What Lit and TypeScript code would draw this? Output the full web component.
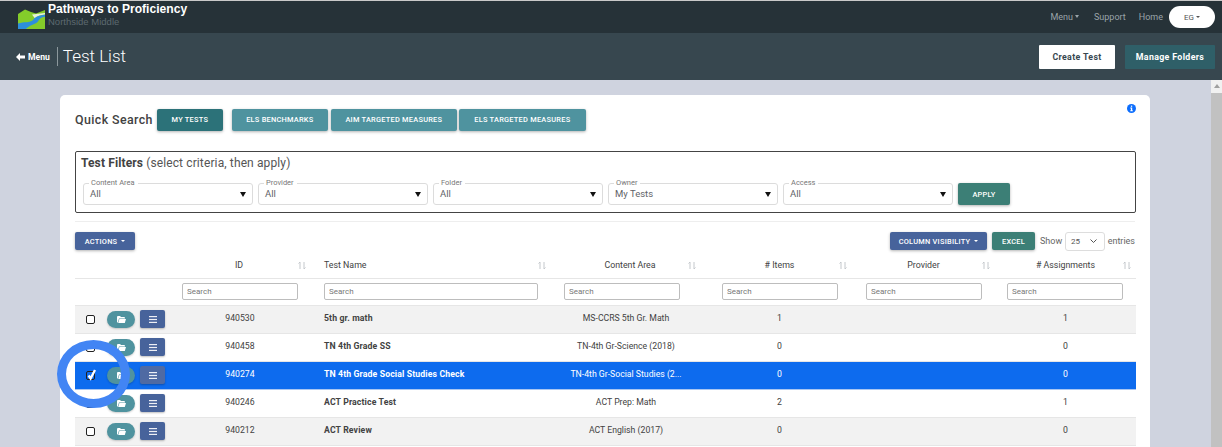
import { LitElement, html, css, svg } from "lit";
import { customElement } from "lit/decorators.js";

interface Row { id: string; name: string; area: string; items: string; assign: string; checked?: boolean; }
const ROWS: Row[] = [
  { id: "940530", name: "5th gr. math", area: "MS-CCRS 5th Gr. Math", items: "1", assign: "1" },
  { id: "940458", name: "TN 4th Grade SS", area: "TN-4th Gr-Science (2018)", items: "0", assign: "0" },
  { id: "940274", name: "TN 4th Grade Social Studies Check", area: "TN-4th Gr-Social Studies (2...", items: "0", assign: "0", checked: true },
  { id: "940246", name: "ACT Practice Test", area: "ACT Prep: Math", items: "2", assign: "1" },
  { id: "940212", name: "ACT Review", area: "ACT English (2017)", items: "0", assign: "0" },
];
const FILTERS = [
  { label: "Content Area", value: "All" },
  { label: "Provider", value: "All" },
  { label: "Folder", value: "All" },
  { label: "Owner", value: "My Tests" },
  { label: "Access", value: "All" },
];
const HEADS = ["ID", "Test Name", "Content Area", "# Items", "Provider", "# Assignments"];
const CLS = ["c-id", "c-name", "c-area", "c-items", "c-prov", "c-assign"];

const caret = html`<span class="caret"></span>`;
const sortIcon = svg`<svg class="sort" width="8" height="9" viewBox="0 0 8 9" fill="none" stroke="currentColor" stroke-width="1"><path d="M2 8V1M.5 2.5 2 1 M6 1v7M6 8 7.5 6.5"/></svg>`;

@customElement("app-root")
export class AppRoot extends LitElement {
  static styles = css`
    :host { display: block; width: 1222px; height: 447px; overflow: hidden; font-family: Roboto, "Liberation Sans", sans-serif; color: #212529; background: #cfd3df; }
    * { box-sizing: border-box; }
    .top { height: 33px; background: #263238; border-top: 1px solid #c9c9c9; display: flex; align-items: center; padding: 0 7px 0 18px; }
    .logo { width: 27px; height: 21px; margin-top: 3px; flex: none; }
    .brand { margin-left: 3px; margin-top: -6px; }
    .brand b { display: block; font-size: 12.1px; line-height: 14px; font-weight: 700; color: #fff; font-family: "Liberation Sans", sans-serif; }
    .brand span { display: block; font-size: 9.5px; line-height: 11px; color: #5d6a70; font-family: "Liberation Sans", sans-serif; }
    .nav { margin-left: auto; display: flex; align-items: center; font-size: 9px; color: #9aa4a8; }
    .nav > span { margin-right: 13px; }
    .nav > .mn { margin-right: 15px; }
    .nav > .home { margin-right: 6px; }
    .caret { display: inline-block; border-top: 3px solid currentColor; border-left: 2.5px solid transparent; border-right: 2.5px solid transparent; margin-left: 2px; vertical-align: 2px; }
    .nav > .eg { margin: 0; background: #fff; color: #555; width: 46px; height: 22px; border-radius: 11px; display: flex; align-items: center; justify-content: center; font-size: 8px; }
    .nav .eg .caret { border-top-width: 2px; border-left-width: 2px; border-right-width: 2px; margin-left: 2px; }
    .sub { height: 47px; background: #37474f; display: flex; align-items: center; padding: 0 7px 0 16px; color: #fff; }
    .back { font-size: 8.6px; font-weight: 700; display: flex; align-items: center; gap: 3px; }
    .title { font-size: 17px; font-weight: 300; border-left: 1px solid #8b979c; margin-left: 7px; padding-left: 5px; line-height: 19px; }
    .create, .manage { height: 24px; display: flex; align-items: center; justify-content: center; font-size: 8.8px; font-weight: 700; letter-spacing: .35px; }
    .create { margin-left: auto; width: 76px; background: #fff; color: #37474f; border-radius: 1px; }
    .manage { margin-left: 10px; width: 90px; background: #2f5f68; color: #fff; border-radius: 1px; }
    .body { display: flex; height: 367px; }
    .main { flex: 1; padding: 15px 61px 0 60px; overflow: hidden; position: relative; }
    .bar { width: 11px; flex: none; background: #f1f1f1; display: flex; flex-direction: column; align-items: center; padding-top: 4px; }
    .bar i { border-bottom: 4px solid #a0a0a0; border-left: 3.5px solid transparent; border-right: 3.5px solid transparent; }
    .bar u { display: block; width: 100%; flex: 1; margin-top: 5px; background: #c1c1c1; }
    .card { position: relative; background: #fff; border-radius: 5px 5px 0 0; height: 352px; padding: 13px 15px 0; overflow: hidden; }
    .info { position: absolute; right: 14px; top: 9px; width: 9px; height: 9px; }
    .quick { display: flex; align-items: center; height: 23px; }
    .quick h2 { margin: 0 4px 0 0; font-size: 12.4px; font-weight: 500; color: #424242; letter-spacing: .4px; white-space: nowrap; }
    .btn { height: 22px; display: inline-flex; align-items: center; justify-content: center; font-size: 7.4px; font-weight: 500; color: #fff; letter-spacing: .25px; border-radius: 2px; box-shadow: 0 1px 3px rgba(0,0,0,.3); text-transform: uppercase; white-space: nowrap; }
    .my { width: 66px; background: #2c7279; margin-right: 9px; }
    .teal { background: #4f939f; margin-right: 3px; }
    .b1 { width: 96px; } .b2 { width: 126px; margin-right: 2px; } .b3 { width: 127px; }
    .filters { margin-top: 20px; width: 1061px; height: 62px; border: 1px solid #444; border-radius: 2px; padding: 4px 6px 0 5px; }
    .filters h3 { margin: 0; font-size: 12px; line-height: 15px; font-weight: 400; color: #555; letter-spacing: .12px; }
    .filters h3 b { font-weight: 700; color: #424242; }
    .frow { display: flex; gap: 5px; margin-top: 12px; align-items: flex-start; margin-left: 2px; }
    .sel { position: relative; width: 170px; height: 22px; border: 1px solid #dcdcdc; border-radius: 3px; font-size: 9.5px; color: #5f6368; padding: 3px 6px; line-height: 13px; }
    .sel label { position: absolute; left: 5px; top: -5px; background: #fff; padding: 0 3px 0 2px; font-size: 7.5px; line-height: 8px; color: #777; }
    .sel::after { content: ""; position: absolute; right: 6px; top: 8px; border-top: 5px solid #111; border-left: 3px solid transparent; border-right: 3px solid transparent; }
    .apply { width: 52px; background: #3c7f76; height: 22px; }
    hr { margin: 8px 0 0; border: 0; border-top: 1px solid #eee; }
    .tools { display: flex; align-items: center; height: 18px; margin-top: 10px; }
    .blue { background: #47639b; }
    .actions { width: 60px; height: 18px; }
    .actions .caret, .colvis .caret { margin-left: 4px; vertical-align: 1px; border-top-width: 2.5px; border-left-width: 2.5px; border-right-width: 2.5px; }
    .colvis { width: 97px; height: 18px; margin-left: auto; }
    .excel { width: 43px; height: 18px; margin-left: 5px; background: #3c7f76; }
    .show { display: flex; align-items: center; justify-content: space-between; width: 95px; font-size: 9px; color: #666; margin-left: 5px; }
    .num { width: 40px; height: 19px; border: 1px solid #ddd; border-radius: 3px; display: flex; align-items: center; justify-content: space-between; padding: 0 7px 0 5px; font-size: 8px; color: #555; }
    table { border-collapse: collapse; table-layout: fixed; width: 1061px; margin-top: 3px; font-size: 8.7px; color: #424242; }
    th { font-weight: 400; font-size: 8.8px; color: #424242; height: 25px; border-bottom: 1px solid #e6e6e6; position: relative; padding: 0; text-align: center; }
    td { padding: 0; }
    th.c-id { padding-right: 5px; }
    th.c-name { text-align: left; padding-left: 13px; }
    th.c-area { padding-left: 8px; }
    th.c-items, td.c-items { padding-left: 6px; }
    .sort { position: absolute; right: 5px; top: 8px; color: #c4c8cc; }
    .srow td { height: 27px; border-bottom: 1px solid #e6e6e6; padding-left: 0; }
    input { display: block; height: 17px; border: 1px solid #bdbdbd; border-radius: 2px; padding: 0 4px; font: 400 8px Roboto, sans-serif; color: #333; }
    input::placeholder { color: #777; }
    .in-id { width: 116px; margin-left: 10px; }
    .in-name { width: 214px; margin-left: 13px; }
    .in-area { width: 116px; margin-left: 13px; }
    .in-items { width: 116px; margin-left: 21px; }
    .in-prov { width: 116px; margin-left: 14px; }
    .in-assign { width: 116px; margin-left: 12px; }
    tbody tr.dt td { height: 28px; border-bottom: 1px solid #e6e6e6; text-align: center; padding-bottom: 2px; }
    tbody tr.dt td.first { padding-bottom: 0; }
    tbody tr.dt td.c-idv { padding-right: 3px; }
    tr.odd td { background: #f2f2f2; }
    tbody tr.on td { background: #0d6bee; color: #fff; border-bottom-color: #a9c6f2; }
    tbody tr.dt td.c-name { text-align: left; padding-left: 13px; font-weight: 700; letter-spacing: .13px; }
    .acts { display: flex; align-items: center; padding-left: 11px; }
    .cb { width: 9px; height: 9px; border: 1px solid #222; border-radius: 2px; background: #fff; position: relative; flex: none; }
    .on .cb { background: #0d6bee; }
    .cb svg { position: absolute; left: -1px; top: -4px; }
    .pill { width: 28px; height: 17px; border-radius: 9px; background: #4f939f; margin-left: 12px; display: flex; align-items: center; justify-content: center; box-shadow: 0 1px 2px rgba(0,0,0,.2); flex: none; }
    .menu { width: 25px; height: 18px; border-radius: 2px; background: #47639b; margin-left: 5px; display: flex; align-items: center; justify-content: center; box-shadow: 0 1px 2px rgba(0,0,0,.25); flex: none; }
    tr.on .menu { background: #4f6aa3; }
    .ring { position: absolute; left: 57px; top: 260px; width: 73px; height: 68px; border: 9.5px solid #4285f4; border-radius: 50%; pointer-events: none; }
  `;

  private logo() {
    return svg`<svg class="logo" viewBox="0 0 27 21">
      <path d="M0 6 7 1.5 13 4 18 5.5 27 2V21H0Z" fill="#84cc2a"/>
      <path d="M14 6.5 27 5V6.5C22 7 19 8 17 10.5Z" fill="#e8f3d8"/>
      <path d="M0 15.5C6 13.5 12 15 15 12 17 9 20 7.3 27 6.7V8.8C23 9.2 21.5 11 20 13.5 17 17 11 17 8 21H0Z" fill="#2d8fdc"/>
    </svg>`;
  }

  private folderIcon() {
    return svg`<svg width="9" height="7" viewBox="0 0 9 7"><path d="M0 1a1 1 0 0 1 1-1h2l1 1h3a1 1 0 0 1 1 1v.5H2L.8 6.5H.5A.5.5 0 0 1 0 6ZM2.4 3H9L7.8 7H1.2Z" fill="#fff"/></svg>`;
  }

  render() {
    return html`
      <div class="top">
        ${this.logo()}
        <div class="brand"><b>Pathways to Proficiency</b><span>Northside Middle</span></div>
        <div class="nav">
          <span class="mn">Menu${caret}</span><span>Support</span><span class="home">Home</span>
          <span class="eg">EG${caret}</span>
        </div>
      </div>
      <div class="sub">
        <span class="back"><svg width="9" height="8" viewBox="0 0 9 8"><path d="M4 0 0 4l4 4V5.5h5v-3H4Z" fill="#fff"/></svg>Menu</span>
        <span class="title">Test List</span>
        <span class="create">Create Test</span>
        <span class="manage">Manage Folders</span>
      </div>
      <div class="body">
        <div class="main">
          <div class="card">
            <svg class="info" viewBox="0 0 9 9"><circle cx="4.5" cy="4.5" r="4.5" fill="#0d6efd"/><rect x="3.9" y="1.6" width="1.3" height="1.2" fill="#fff"/><path d="M3.3 3.5h1.9v2.8h.6v.9H3.3v-.9h.6V4.4h-.6Z" fill="#fff"/></svg>
            <div class="quick">
              <h2>Quick Search</h2>
              <span class="btn my">My Tests</span>
              <span class="btn teal b1">ELS Benchmarks</span>
              <span class="btn teal b2">AIM Targeted Measures</span>
              <span class="btn teal b3">ELS Targeted Measures</span>
            </div>
            <div class="filters">
              <h3><b>Test Filters</b> (select criteria, then apply)</h3>
              <div class="frow">
                ${FILTERS.map((f) => html`<div class="sel"><label>${f.label}</label>${f.value}</div>`)}
                <span class="btn apply">Apply</span>
              </div>
            </div>
            <hr />
            <div class="tools">
              <span class="btn blue actions">Actions${caret}</span>
              <span class="btn blue colvis">Column Visibility${caret}</span>
              <span class="btn excel">Excel</span>
              <span class="show">Show <span class="num">25 <svg width="7" height="4" viewBox="0 0 7 4" fill="none" stroke="#555"><path d="M.5.5l3 3 3-3"/></svg></span> entries</span>
            </div>
            <table>
              <colgroup><col style="width:97px"/><col style="width:139px"/><col style="width:240px"/><col style="width:150px"/><col style="width:151px"/><col style="width:143px"/><col style="width:141px"/></colgroup>
              <thead>
                <tr><th></th>${HEADS.map((h, i) => html`<th class=${CLS[i]}>${h}${sortIcon}</th>`)}</tr>
              </thead>
              <tbody>
                <tr class="srow"><td></td>${CLS.map((c) => html`<td><input class=${c.replace("c-", "in-")} placeholder="Search" /></td>`)}</tr>
                ${ROWS.map((r, i) => html`
                  <tr class="dt ${i % 2 === 0 ? "odd" : ""} ${r.checked ? "on" : ""}">
                    <td class="first"><div class="acts">
                      <span class="cb">${r.checked ? svg`<svg width="11" height="13" viewBox="0 0 11 13"><path d="M2.6 7.5 4.6 10.5 9 2" fill="none" stroke="#fff" stroke-width="2.3"/></svg>` : ""}</span>
                      <span class="pill">${this.folderIcon()}</span>
                      <span class="menu"><svg width="8" height="7" viewBox="0 0 8 7" fill="#fff" opacity=".9"><rect width="8" height="1.2"/><rect y="2.9" width="8" height="1.2"/><rect y="5.8" width="8" height="1.2"/></svg></span>
                    </div></td>
                    <td class="c-idv">${r.id}</td><td class="c-name">${r.name}</td><td>${r.area}</td><td class="c-items">${r.items}</td><td></td><td>${r.assign}</td>
                  </tr>`)}
              </tbody>
            </table>
          </div>
          <div class="ring"></div>
        </div>
        <div class="bar"><i></i><u></u></div>
      </div>
    `;
  }
}
